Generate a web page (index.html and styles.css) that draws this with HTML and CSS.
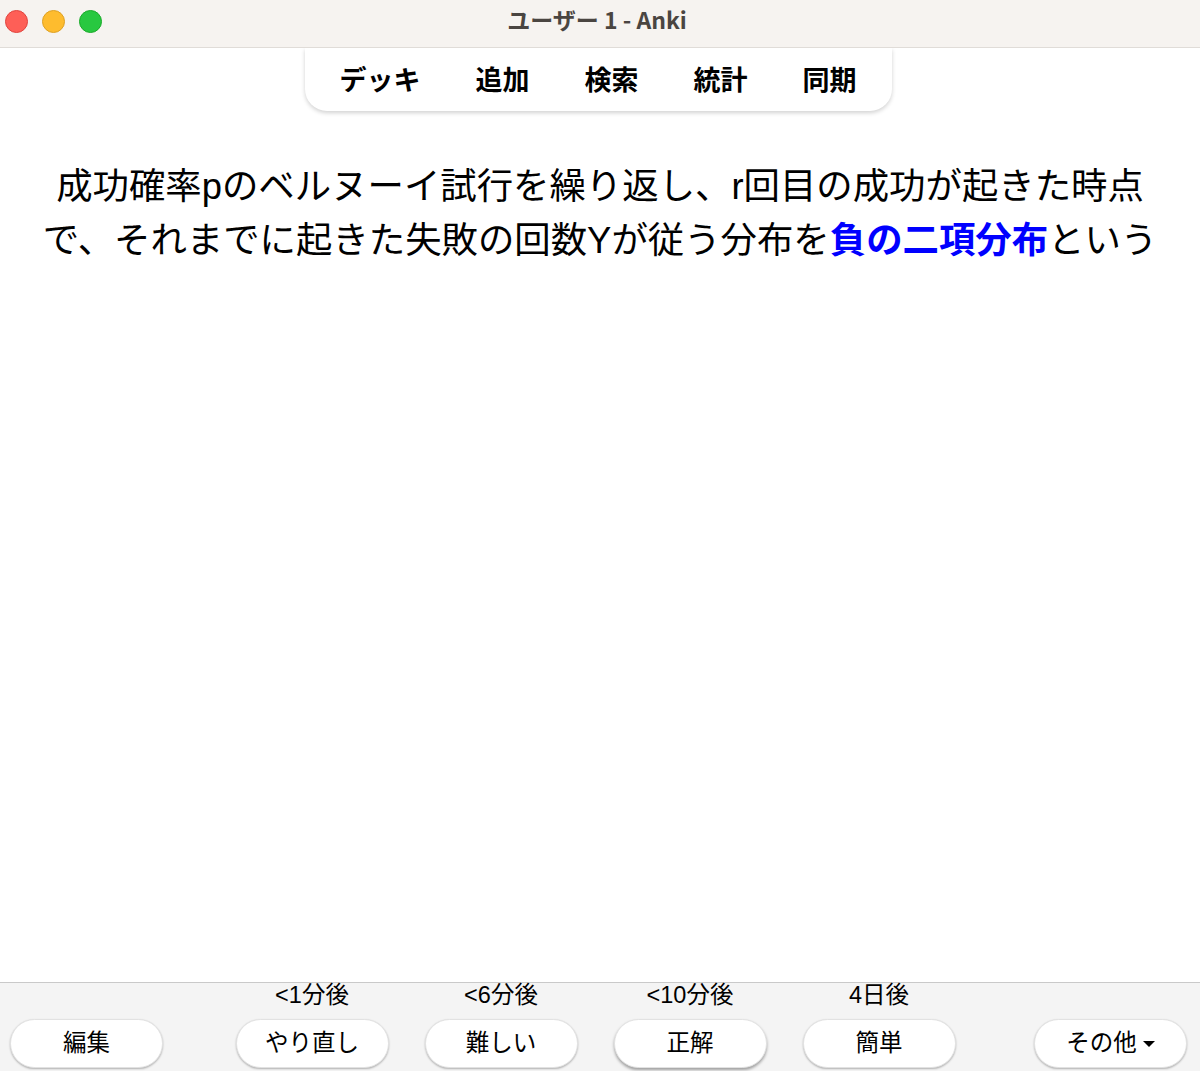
FILE: index.html
```html
<!DOCTYPE html>
<html lang="ja">
<head>
<meta charset="utf-8">
<title>ユーザー 1 - Anki</title>
<link rel="stylesheet" href="styles.css">
</head>
<body>
<div class="window">
  <header class="titlebar">
    <div class="lights">
      <span class="light red"></span>
      <span class="light yellow"></span>
      <span class="light green"></span>
    </div>
    <div class="title">ユーザー 1 - Anki</div>
  </header>
  <nav class="toolbar">
    <span class="tool">デッキ</span>
    <span class="tool">追加</span>
    <span class="tool">検索</span>
    <span class="tool">統計</span>
    <span class="tool">同期</span>
  </nav>
  <main class="card">
    <p class="question">成功確率pのベルヌーイ試行を繰り返し、r回目の成功が起きた時点<br>で、それまでに起きた失敗の回数Yが従う分布を<b class="cloze">負の二項分布</b>という</p>
  </main>
  <footer class="bottombar">
    <div class="col"><button class="btn">編集</button></div>
    <div class="answers">
      <div class="col"><span class="due">&lt;1分後</span><button class="btn">やり直し</button></div>
      <div class="col"><span class="due">&lt;6分後</span><button class="btn">難しい</button></div>
      <div class="col"><span class="due">&lt;10分後</span><button class="btn default">正解</button></div>
      <div class="col"><span class="due">4日後</span><button class="btn">簡単</button></div>
    </div>
    <div class="col"><button class="btn">その他 <span class="caret"></span></button></div>
  </footer>
</div>
</body>
</html>
```
FILE: styles.css
```css
* { box-sizing: border-box; }
html, body { margin: 0; padding: 0; }
body {
  font-family: "Liberation Sans", "Noto Sans CJK JP", sans-serif;
  background: #ffffff;
  color: #000;
}
.window {
  height: 1071px;
  display: flex;
  flex-direction: column;
  overflow: hidden;
}
.titlebar {
  height: 48px;
  flex: none;
  background: #f6f3f0;
  border-bottom: 1px solid #e0dcd8;
  display: flex;
  align-items: center;
  justify-content: center;
  position: relative;
}
.lights {
  position: absolute;
  left: 5px;
  top: 10px;
  display: flex;
  gap: 14px;
}
.light {
  width: 23px;
  height: 23px;
  border-radius: 50%;
  display: block;
}
.red { background: #fe5f57; border: 1px solid #e0443e; }
.yellow { background: #febc2e; border: 1px solid #dea123; }
.green { background: #28c840; border: 1px solid #1aab29; }
.title {
  font-family: "Noto Sans CJK JP", sans-serif;
  font-weight: 700;
  font-size: 23px;
  color: #4a4541;
  margin-left: -6px;
  margin-top: -10px;
}
.toolbar {
  align-self: center;
  margin-left: -4px;
  width: 587px;
  height: 63px;
  flex: none;
  background: #fff;
  border-radius: 0 0 22px 22px;
  box-shadow: 0 2px 4px rgba(0,0,0,0.18);
  display: flex;
  justify-content: center;
  align-items: center;
  gap: 55px;
  padding-bottom: 2px;
}
.tool {
  font-family: "Noto Sans CJK JP", sans-serif;
  font-weight: 700;
  font-size: 27px;
  color: #000;
}
.card {
  flex: 1;
  padding-top: 49px;
}
.question {
  margin: 0;
  text-align: center;
  font-size: 36.4px;
  line-height: 54px;
  color: #000;
}
.cloze {
  color: #0000ff;
  font-weight: 700;
}
.bottombar {
  flex: none;
  height: 89px;
  background: #f4f4f4;
  border-top: 1px solid #c9c9c9;
  display: flex;
  justify-content: space-between;
  align-items: flex-end;
  padding: 0 13px 3px 10px;
}
.answers {
  display: flex;
  gap: 36px;
  margin-right: 6px;
}
.col {
  display: flex;
  flex-direction: column;
  align-items: center;
}
.due {
  font-size: 23.5px;
  line-height: 26px;
  margin-bottom: 11px;
  color: #000;
}
.btn {
  width: 153px;
  height: 49px;
  border-radius: 25px;
  border: 1px solid #e2e2e2;
  background: #fff;
  box-shadow: 0 1px 2px rgba(0,0,0,0.28);
  font-family: "Liberation Sans", "Noto Sans CJK JP", sans-serif;
  font-size: 23.5px;
  color: #000;
  padding: 0 0 5px 0;
  display: flex;
  align-items: center;
  justify-content: center;
  gap: 6px;
}
.btn.default {
  box-shadow: 0 2px 3px rgba(0,0,0,0.35);
}
.caret {
  display: inline-block;
  width: 0;
  height: 0;
  border-left: 6px solid transparent;
  border-right: 6px solid transparent;
  border-top: 6px solid #000;
  margin-top: 5px;
}
```
